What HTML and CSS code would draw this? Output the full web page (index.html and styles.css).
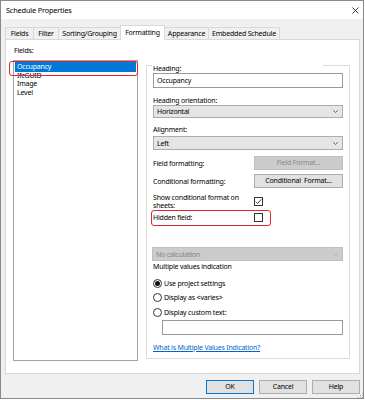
FILE: index.html
```html
<!DOCTYPE html>
<html lang="en">
<head>
    <meta charset="UTF-8">
    <meta name="viewport" content="width=device-width, initial-scale=1.0">
    <title>Schedule Properties</title>
    <link rel="stylesheet" href="styles.css">
</head>
<body>
    <div class="window">
        <div class="titlebar">
            <span class="title">Schedule Properties</span>
            <svg class="close" width="7" height="7" viewBox="0 0 7 7"><path d="M0.5 0.5L6.5 6.5M6.5 0.5L0.5 6.5" stroke="#222" stroke-width="0.9" fill="none"/></svg>
        </div>

        <div class="dialog">
            <div class="tabs">
                <div class="tab tab-fields">Fields</div>
                <div class="tab tab-filter">Filter</div>
                <div class="tab tab-sorting">Sorting/Grouping</div>
                <div class="tab tab-formatting active">Formatting</div>
                <div class="tab tab-appearance">Appearance</div>
                <div class="tab tab-embedded">Embedded Schedule</div>
            </div>

            <div class="panel">
                <!-- left: field list -->
                <div class="fields-col">
                    <div class="fields-label">Fields:</div>
                    <div class="listbox">
                        <div class="item selected">Occupancy</div>
                        <div class="item">IfcGUID</div>
                        <div class="item">Image</div>
                        <div class="item">Level</div>
                    </div>
                </div>

                <!-- right: formatting options -->
                <div class="group">
                    <div class="g-label first">Heading:</div>
                    <div class="textbox heading-box">Occupancy</div>

                    <div class="g-label orient-label">Heading orientation:</div>
                    <div class="dropdown orient-drop">
                        <span>Horizontal</span>
                        <svg class="chev" width="5" height="3" viewBox="0 0 5 3"><path d="M0.3 0.3L2.5 2.5L4.7 0.3" stroke="#444" stroke-width="0.8" fill="none"/></svg>
                    </div>

                    <div class="g-label align-label">Alignment:</div>
                    <div class="dropdown align-drop">
                        <span>Left</span>
                        <svg class="chev" width="5" height="3" viewBox="0 0 5 3"><path d="M0.3 0.3L2.5 2.5L4.7 0.3" stroke="#444" stroke-width="0.8" fill="none"/></svg>
                    </div>

                    <div class="row row-field">
                        <span class="row-label">Field formatting:</span>
                        <button class="btn wide disabled">Field Format...</button>
                    </div>
                    <div class="row row-cond">
                        <span class="row-label">Conditional formatting:</span>
                        <button class="btn wide">Conditional&nbsp; Format...</button>
                    </div>
                    <div class="row row-show">
                        <span class="row-label two-line">Show conditional format on<br>sheets:</span>
                        <span class="checkbox">
                            <svg width="7" height="7" viewBox="0 0 7 7"><path d="M0.8 3.6L2.7 5.5L6.3 1.2" stroke="#333" stroke-width="0.9" fill="none"/></svg>
                        </span>
                    </div>
                    <div class="row row-hidden">
                        <span class="row-label">Hidden field:</span>
                        <span class="checkbox"></span>
                    </div>

                    <div class="dropdown calc-drop disabled">
                        <span>No calculation</span>
                        <svg class="chev" width="5" height="3" viewBox="0 0 5 3"><path d="M0.3 0.3L2.5 2.5L4.7 0.3" stroke="#a8a8a8" stroke-width="0.8" fill="none"/></svg>
                    </div>

                    <div class="g-label multi-label">Multiple values indication</div>
                    <div class="radio-row r1"><span class="radio checked"></span>Use project settings</div>
                    <div class="radio-row r2"><span class="radio"></span>Display as &lt;varies&gt;</div>
                    <div class="radio-row r3"><span class="radio"></span>Display custom text:</div>
                    <div class="textbox custom-box"></div>

                    <a class="help-link" href="#">What is Multiple Values Indication?</a>
                </div>
            </div>

            <div class="footer">
                <button class="btn default">OK</button>
                <button class="btn">Cancel</button>
                <button class="btn">Help</button>
                <svg class="grip" width="5" height="5" viewBox="0 0 5 5">
                    <rect x="4" y="0" width="1" height="1" fill="#aaa"/>
                    <rect x="2" y="2" width="1" height="1" fill="#aaa"/>
                    <rect x="4" y="2" width="1" height="1" fill="#aaa"/>
                    <rect x="0" y="4" width="1" height="1" fill="#aaa"/>
                    <rect x="2" y="4" width="1" height="1" fill="#aaa"/>
                    <rect x="4" y="4" width="1" height="1" fill="#aaa"/>
                </svg>
            </div>
        </div>
    </div>
</body>
</html>
```

FILE: styles.css
```css
* {
    box-sizing: border-box;
}

body {
    margin: 0;
    padding: 0;
    background-color: #fff;
    font-family: "Noto Sans", "Liberation Sans", sans-serif;
    font-size: 7px;
    letter-spacing: -0.2px;
    color: #000;
}

.window {
    width: 364px;
    height: 399px;
    border: 1px solid #8a8a8a;
    display: flex;
    flex-direction: column;
    background-color: #f0f0f0;
}

.titlebar {
    height: 18px;
    background-color: #fff;
    display: flex;
    align-items: center;
    justify-content: space-between;
    padding: 0 4px 0 5px;
}

.title {
    font-size: 7.4px;
}

.close {
    display: block;
    margin-top: 1px;
}

.dialog {
    flex: 1;
    display: flex;
    flex-direction: column;
    padding: 6px 3px 0 4px;
    position: relative;
}

/* tabs */
.tabs {
    display: flex;
    align-items: flex-end;
    height: 14px;
}

.tab {
    height: 12px;
    border: 1px solid #d9d9d9;
    border-bottom: none;
    background-color: #f0f0f0;
    margin-left: -1px;
    display: flex;
    align-items: center;
    justify-content: center;
    line-height: 1;
    white-space: nowrap;
}

.tab-fields { width: 29px; margin-left: 0; }
.tab-filter { width: 26px; }
.tab-sorting { width: 63px; }
.tab-formatting { width: 45px; }
.tab-appearance { width: 45px; }
.tab-embedded { width: 72px; }

.tab.active {
    height: 15px;
    margin-bottom: -1px;
    background-color: #fff;
    position: relative;
    z-index: 1;
    padding-bottom: 2px;
}

/* white tab page */
.panel {
    height: 335px;
    background-color: #fff;
    border: 1px solid #d9d9d9;
    display: flex;
    padding-left: 7px;
    gap: 8px;
}

.fields-col {
    width: 125px;
}

.fields-label {
    height: 20px;
    padding: 6px 0 0 1px;
    line-height: 9px;
}

.listbox {
    height: 301px;
    border: 1px solid #9ea3a9;
    padding: 1px;
}

.item {
    line-height: 8.4px;
    padding-left: 2px;
}

.item.selected {
    height: 10px;
    line-height: 10px;
    background-color: #0078d7;
    color: #fff;
    position: relative;
}

.item.selected::after {
    content: "";
    position: absolute;
    left: -6px;
    top: -1px;
    right: -2px;
    height: 13px;
    border: 1.5px solid #e3242b;
    border-radius: 3px;
}

/* group box */
.group {
    width: 204px;
    height: 294px;
    margin-top: 25px;
    border: 1px solid #dcdcdc;
    padding-left: 6px;
    position: relative;
}

.group::before {
    content: "";
    position: absolute;
    left: 5px;
    top: -1px;
    width: 171px;
    height: 1px;
    background-color: #fff;
}

.g-label {
    height: 9px;
    line-height: 9px;
    white-space: nowrap;
}

.g-label.first {
    height: 7px;
    line-height: 6px;
}

.orient-label { margin-top: 8px; }
.align-label { margin-top: 7px; }
.multi-label { margin-top: 1px; height: 10px; line-height: 10px; }

.textbox {
    height: 15px;
    width: 190px;
    border: 1px solid #9a9a9a;
    background-color: #fff;
    padding-left: 3px;
    line-height: 13px;
}

.dropdown {
    width: 190px;
    background-color: #e5e5e5;
    border: 1px solid #acacac;
    display: flex;
    align-items: center;
    justify-content: space-between;
    padding: 0 4px 0 3px;
}

.chev {
    display: block;
}

.orient-drop { height: 13px; }
.align-drop { height: 14px; margin-top: 2px; }

.dropdown.disabled {
    background-color: #cccccc;
    border-color: #bfbfbf;
    color: #838383;
}

.calc-drop {
    height: 14px;
    width: 191px;
    margin-left: -1px;
    margin-top: 24px;
}

.row {
    display: flex;
    align-items: center;
    position: relative;
}

.row-label {
    width: 101px;
    white-space: nowrap;
}

.row-field { height: 14px; margin-top: 6px; }
.row-cond { height: 14px; margin-top: 4px; }
.row-show { height: 17px; margin-top: 5px; }
.row-hidden { height: 11px; margin-top: 2px; }

.two-line {
    line-height: 8px;
}

.row-hidden::after {
    content: "";
    position: absolute;
    left: -2px;
    top: -2px;
    width: 118px;
    height: 14px;
    border: 1.5px solid #e3242b;
    border-radius: 3px;
}

.checkbox {
    width: 9px;
    height: 9px;
    border: 1px solid #333;
    background-color: #fff;
    display: flex;
    align-items: center;
    justify-content: center;
}

.checkbox svg {
    display: block;
}

.btn {
    font-family: inherit;
    font-size: 7px;
    letter-spacing: -0.2px;
    color: #000;
    background-color: #e1e1e1;
    border: 1px solid #adadad;
    padding: 0;
    height: 14px;
    width: 48px;
    line-height: 12px;
    border-radius: 0;
}

.btn.wide {
    width: 89px;
    height: 14px;
}

.btn.disabled {
    background-color: #cccccc;
    border-color: #bfbfbf;
    color: #8a8a8a;
}

.btn.default {
    border-color: #0078d7;
}

.radio-row {
    height: 14px;
    display: flex;
    align-items: center;
    gap: 2px;
}

.r1 { margin-top: 4px; }
.r3 { margin-top: 1px; }

.radio {
    width: 9px;
    height: 9px;
    border: 1px solid #333;
    border-radius: 50%;
    background-color: #fff;
    display: flex;
    align-items: center;
    justify-content: center;
}

.radio.checked::after {
    content: "";
    width: 5px;
    height: 5px;
    border-radius: 50%;
    background-color: #111;
}

.custom-box {
    width: 181px;
    margin-left: 9px;
    margin-top: 1px;
}

.help-link {
    display: block;
    margin-top: 8px;
    height: 9px;
    line-height: 9px;
    color: #0066cc;
    text-decoration: underline;
}

/* bottom buttons */
.footer {
    display: flex;
    justify-content: flex-end;
    gap: 5px;
    margin-top: 6px;
}

.grip {
    position: absolute;
    right: 0;
    bottom: 0;
}
```
